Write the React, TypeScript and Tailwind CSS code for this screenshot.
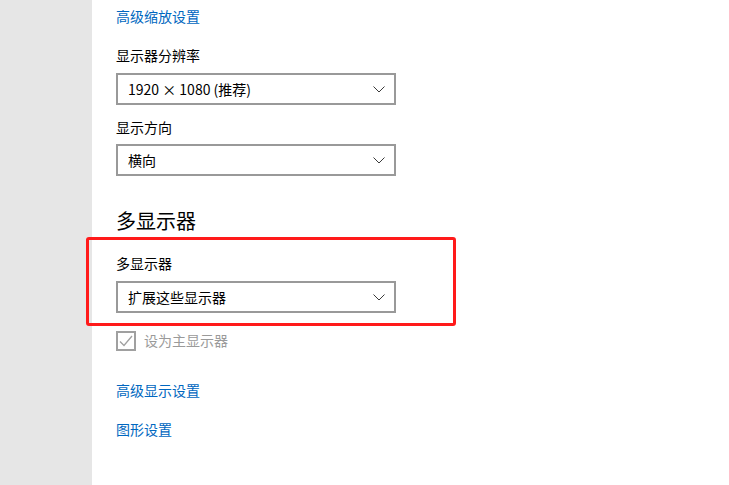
const font = { fontFamily: '"Noto Sans CJK SC", "Noto Sans", sans-serif' };

function Chevron() {
  return (
    <svg width="12" height="7" viewBox="0 0 12 7" fill="none">
      <path d="M0.5 0.5L6 6L11.5 0.5" stroke="#3a3a3a" strokeWidth="1" />
    </svg>
  );
}

function Select({ value }: { value: string }) {
  return (
    <div className="flex h-[32px] w-[280px] items-center justify-between border-2 border-[#999999] bg-white pl-[10px] pr-[9px]">
      <span className="text-[14px] leading-[20px] text-black">{value}</span>
      <Chevron />
    </div>
  );
}

function Label({ children }: { children: string }) {
  return <div className="text-[14px] leading-[20px] text-black">{children}</div>;
}

function LinkText({ children }: { children: string }) {
  return <div className="text-[14px] leading-[20px] text-[#0067c0]">{children}</div>;
}

export default function App() {
  return (
    <div className="flex h-[485px] w-[729px] overflow-hidden bg-white" style={font}>
      <div className="w-[92px] shrink-0 bg-[#e6e6e6]" />
      <div className="flex flex-col pl-6 pt-[6px]">
        <LinkText>高级缩放设置</LinkText>

        <div className="mt-[19px]"><Label>显示器分辨率</Label></div>
        <div className="mt-[8px]"><Select value="1920 × 1080 (推荐)" /></div>

        <div className="mt-[12px]"><Label>显示方向</Label></div>
        <div className="mt-[7px]"><Select value="横向" /></div>

        <div className="mt-[31px] text-[20px] leading-[28px] text-black">多显示器</div>

        <div className="relative mt-[18px]">
          <Label>多显示器</Label>
          <div className="mt-[8px]"><Select value="扩展这些显示器" /></div>
          <div className="pointer-events-none absolute -bottom-[13px] -left-[30px] -right-[60px] -top-[16px] rounded-[3px] border-[3px] border-[#ff1a1a]" />
        </div>

        <div className="mt-[18px] flex items-center gap-[8px]">
          <div className="flex h-[20px] w-[20px] items-center justify-center border-2 border-[#a0a0a0]">
            <svg width="14" height="12" viewBox="0 0 14 12" fill="none">
              <path d="M1 6.5L5 10.5L13 1" stroke="#a0a0a0" strokeWidth="1.3" />
            </svg>
          </div>
          <span className="-mt-[2px] text-[14px] leading-[20px] text-[#9a9a9a]">设为主显示器</span>
        </div>

        <div className="mt-[29px]"><LinkText>高级显示设置</LinkText></div>
        <div className="mt-[19px]"><LinkText>图形设置</LinkText></div>
      </div>
    </div>
  );
}
